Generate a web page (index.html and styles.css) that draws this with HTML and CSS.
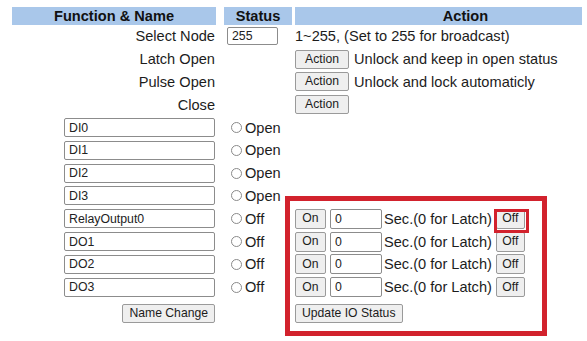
FILE: index.html
```html
<!DOCTYPE html>
<html>
<head>
<meta charset="utf-8">
<link rel="stylesheet" href="styles.css">
</head>
<body>
<div class="panel">
  <div class="th th1">Function &amp; Name</div>
  <div class="th th2">Status</div>
  <div class="th th3">Action</div>

  <div class="c1">Select Node</div>
  <div class="c2"><input class="node" type="text" value="255"></div>
  <div class="c3">1~255, (Set to 255 for broadcast)</div>

  <div class="c1">Latch Open</div>
  <div class="c2"></div>
  <div class="c3"><button class="btn act">Action</button><span class="desc">Unlock and keep in open status</span></div>

  <div class="c1">Pulse Open</div>
  <div class="c2"></div>
  <div class="c3"><button class="btn act">Action</button><span class="desc">Unlock and lock automaticly</span></div>

  <div class="c1">Close</div>
  <div class="c2"></div>
  <div class="c3"><button class="btn act">Action</button></div>

  <div class="c1"><input class="name" type="text" value="DI0"></div>
  <div class="c2 st"><span class="radio"></span>Open</div>
  <div class="c3"></div>

  <div class="c1"><input class="name" type="text" value="DI1"></div>
  <div class="c2 st"><span class="radio"></span>Open</div>
  <div class="c3"></div>

  <div class="c1"><input class="name" type="text" value="DI2"></div>
  <div class="c2 st"><span class="radio"></span>Open</div>
  <div class="c3"></div>

  <div class="c1"><input class="name" type="text" value="DI3"></div>
  <div class="c2 st"><span class="radio"></span>Open</div>
  <div class="c3"></div>

  <div class="c1"><input class="name" type="text" value="RelayOutput0"></div>
  <div class="c2 st"><span class="radio"></span>Off</div>
  <div class="c3"><button class="btn on">On</button><input class="sec" type="text" value="0"><span class="lbl">Sec.(0 for Latch)</span><button class="btn off">Off</button></div>

  <div class="c1"><input class="name" type="text" value="DO1"></div>
  <div class="c2 st"><span class="radio"></span>Off</div>
  <div class="c3"><button class="btn on">On</button><input class="sec" type="text" value="0"><span class="lbl">Sec.(0 for Latch)</span><button class="btn off">Off</button></div>

  <div class="c1"><input class="name" type="text" value="DO2"></div>
  <div class="c2 st"><span class="radio"></span>Off</div>
  <div class="c3"><button class="btn on">On</button><input class="sec" type="text" value="0"><span class="lbl">Sec.(0 for Latch)</span><button class="btn off">Off</button></div>

  <div class="c1"><input class="name" type="text" value="DO3"></div>
  <div class="c2 st"><span class="radio"></span>Off</div>
  <div class="c3"><button class="btn on">On</button><input class="sec" type="text" value="0"><span class="lbl">Sec.(0 for Latch)</span><button class="btn off">Off</button></div>

  <div class="c1 bottom"><button class="btn">Name Change</button></div>
  <div class="c2 bottom"></div>
  <div class="c3 bottom"><button class="btn">Update IO Status</button></div>
</div>
<div class="mark big"></div>
<div class="mark small"></div>
</body>
</html>
```

FILE: styles.css
```css
html, body {
  margin: 0;
  padding: 0;
  background: #fff;
}
body {
  font-family: "Liberation Sans", Arial, sans-serif;
  font-size: 14.6px;
  color: #1c1c1c;
  width: 587px;
  height: 341px;
  overflow: hidden;
  position: relative;
}
.panel {
  display: grid;
  grid-template-columns: 208px 74px 288px;
  grid-template-rows: 18px repeat(12, 22.8px) 32px;
  margin: 7px 0 0 12px;
}
.th {
  background: #a9c7ea;
  font-weight: bold;
  text-align: center;
  line-height: 18px;
  color: #111;
}
.th1 { margin-right: 4px; }
.th2 { margin-left: 4px; margin-right: 2px; }
.th3 { margin-left: 1px; padding-left: 54px; }
.c1, .c2, .c3 {
  display: flex;
  align-items: center;
  white-space: nowrap;
}
.c1 {
  justify-content: flex-end;
  padding-right: 5px;
}
.c2 { padding-left: 7px; }
.c2.st { padding-left: 11px; }
.c3 { padding-left: 1px; }
.bottom { align-items: flex-start; padding-top: 5px; }
input {
  font-family: "Liberation Sans", Arial, sans-serif;
  font-size: 12.3px;
  color: #222;
  border: 1px solid #8c8c8c;
  border-radius: 2px;
  padding: 0 0 0 4px;
  margin: 0;
  box-sizing: border-box;
  background: #fff;
  outline: none;
}
.name { width: 151px; height: 19px; }
.node { width: 51px; height: 18px; }
.sec { width: 52px; height: 20px; margin-left: 4px; }
.radio {
  display: inline-block;
  width: 9px;
  height: 9px;
  border: 1px solid #8a8a8a;
  border-radius: 50%;
  margin-right: 3px;
  background: #fff;
}
.btn {
  font-family: "Liberation Sans", Arial, sans-serif;
  font-size: 12.2px;
  color: #1c1c1c;
  background: #efefef;
  border: 1px solid #9a9a9a;
  border-radius: 2px;
  height: 19px;
  padding: 0 6px;
  margin: 0;
  line-height: 17px;
}
.act { width: 54px; padding: 0; }
.desc { margin-left: 5px; }
.on { height: 20px; width: 31px; padding: 0; }
.off { height: 20px; width: 29px; padding: 0; margin-left: 4px; }
.lbl { margin-left: 2px; }
.mark {
  position: absolute;
  box-sizing: border-box;
  border-style: solid;
  border-color: #d2222d;
}
.mark.big {
  left: 285px;
  top: 196px;
  width: 262px;
  height: 140px;
  border-width: 5px;
}
.mark.small {
  left: 494px;
  top: 209px;
  width: 35px;
  height: 24px;
  border-width: 3px;
}
```
